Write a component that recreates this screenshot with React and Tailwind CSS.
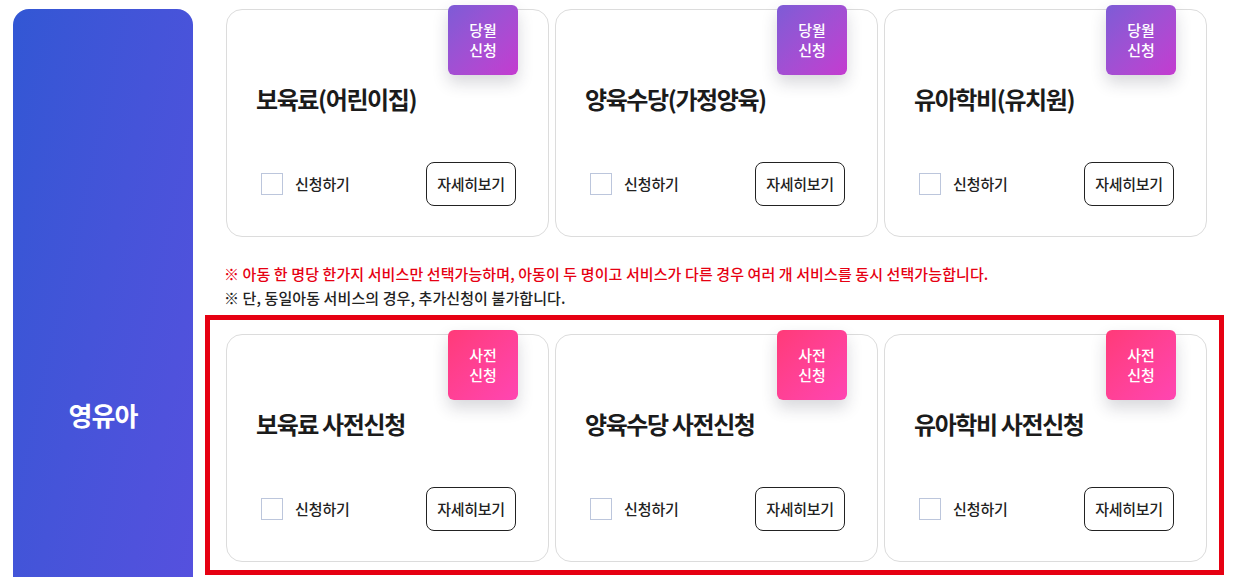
import React from "react";

const topCards = ["보육료(어린이집)", "양육수당(가정양육)", "유아학비(유치원)"];
const preCards = ["보육료 사전신청", "양육수당 사전신청", "유아학비 사전신청"];

function Card({ title, badge, pink }) {
  return (
    <div className="relative h-[228px] rounded-[16px] border border-[#dcdcdc] bg-white px-[30px] pt-[71px]">
      <div
        className={
          "absolute -top-[5px] right-[30px] flex h-[70px] w-[70px] flex-col items-center justify-center rounded-[6px] text-[15px] leading-[20px] font-medium text-white shadow-[0_8px_16px_rgba(40,40,60,0.18)] " +
          (pink
            ? "bg-gradient-to-br from-[#ff3a78] to-[#ff45b2]"
            : "bg-gradient-to-br from-[#7d5bd6] to-[#c43ad0]")
        }
      >
        <span>{badge[0]}</span>
        <span>{badge[1]}</span>
      </div>
      <div className="-ml-[1px] h-[36px] text-[24px] leading-[36px] font-bold tracking-[-1.4px] text-[#1b1b1b]">
        {title}
      </div>
      <div className="mt-[45px] flex items-center justify-between pl-[4px] pr-[2px]">
        <label className="flex items-center">
          <span className="h-[22px] w-[22px] border border-[#bcc6dc] bg-white" />
          <span className="ml-[12px] text-[15px] font-medium tracking-[-0.1px] text-[#222]">신청하기</span>
        </label>
        <button className="flex h-[44px] w-[90px] items-center justify-center rounded-[8px] border border-[#222] bg-white text-[15px] font-medium tracking-[-0.35px] text-[#222]">
          자세히보기
        </button>
      </div>
    </div>
  );
}

export default function App() {
  return (
    <div className="flex w-[1237px] bg-white font-['Noto_Sans_CJK_KR','Noto_Sans',sans-serif]">
      <div className="ml-[13px] mt-[9px] flex h-[810px] w-[180px] shrink-0 items-center justify-center rounded-t-[16px] bg-gradient-to-br from-[#3257d4] to-[#5a4fe0] text-[26px] font-bold tracking-[-1px] text-white">
        영유아
      </div>
      <div className="ml-[33px] w-[981px] shrink-0">
        <div className="mt-[9px] grid grid-cols-3 gap-[6px]">
          {topCards.map((t) => (
            <Card key={t} title={t} badge={["당월", "신청"]} />
          ))}
        </div>
        <div className="mt-[25px] -ml-[2px] text-[15px] leading-[24px] font-medium tracking-[0.1px]">
          <p className="text-[#e60012]">
            ※ 아동 한 명당 한가지 서비스만 선택가능하며, 아동이 두 명이고 서비스가 다른 경우 여러 개 서비스를 동시 선택가능합니다.
          </p>
          <p className="text-[#222]">※ 단, 동일아동 서비스의 경우, 추가신청이 불가합니다.</p>
        </div>
        <div className="mt-[5px] -ml-[21px] w-[1019px] border-[5px] border-[#e60012] pt-[14px] pb-[8px] pl-[16px] pr-[12px]">
          <div className="grid grid-cols-3 gap-[6px]">
            {preCards.map((t) => (
              <Card key={t} title={t} badge={["사전", "신청"]} pink />
            ))}
          </div>
        </div>
      </div>
    </div>
  );
}
